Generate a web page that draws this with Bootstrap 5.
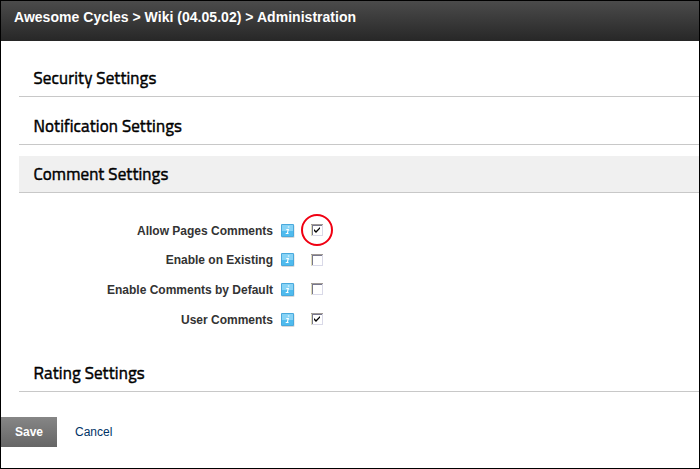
<!DOCTYPE html>
<html lang="en">
<head>
<meta charset="utf-8">
<meta name="viewport" content="width=device-width, initial-scale=1">
<title>Administration</title>
<link href="https://cdn.jsdelivr.net/npm/bootstrap@5.3.0/dist/css/bootstrap.min.css" rel="stylesheet">
<style>
body{font:12px/18px "Liberation Sans",Arial,sans-serif;color:#333;background:#fff}
.page-frame{height:469px;border:1px solid #000;overflow:hidden}
.top-bar{height:40px;padding:7px 13px;background:linear-gradient(#4b4b4b,#272727);color:#fff;font-size:14px;line-height:18px;letter-spacing:.03px}
.sections{padding:19px 0 0 18px}
.section-head{height:37px;margin:0 0 11px;padding:0 14.5px;border-bottom:1px solid #c8c8c8;color:#000;font:400 17px/36px "Titillium Web",Roboto,sans-serif;letter-spacing:.12px;-webkit-text-stroke:.45px #000}
.section-head.active{background:#f0f0f0}
.options{padding:12px 0 21px}
.option{height:29.6px}
.option-label{width:254px;text-align:right}
.info{width:14px;height:14px;margin-left:8px}
.check{width:12px;height:12px;margin:0 0 1px 16px}
.ring{left:-10px;top:-10px;width:32px;height:32px;border:2px solid #f00012;border-radius:50%}
.actions{padding-top:14px}
.save,.save:hover{width:56px;height:30px;background:linear-gradient(#868686,#666);color:#fff;font-size:12px;line-height:30px;padding:0;border:0;border-radius:0}
.cancel{color:#003366;margin-left:18px}
</style>
<script src="https://cdn.jsdelivr.net/npm/bootstrap@5.3.0/dist/js/bootstrap.bundle.min.js"></script>
</head>
<body>
<svg class="d-none">
<symbol id="i-info" viewBox="0 0 14 14"><rect x=".5" y="1" width="13" height="13" rx="1" fill="#d9d9d9"/><rect x="0" y="0" width="13" height="13" rx="1" fill="#4aa9dc"/><rect x="1" y="1" width="11" height="6" fill="#86d3f6"/><rect x="1" y="7" width="11" height="5" fill="#4fbbee"/><path d="M6.8 3h1.6M5.3 5.5h2l-1 4M4.7 9.5h2.9" stroke="#fff" stroke-width="1.1" fill="none"/></symbol>
<symbol id="i-box" viewBox="0 0 12 12"><rect width="12" height="12" fill="#d9d9e8"/><path d="M0 0h12v1H1v11H0z" fill="#a09a96"/><path d="M0 1h1v11H0z" fill="#dedbb8"/><path d="M1 1h10v1H2v9H1z" fill="#77778c"/><rect x="2" y="2" width="9" height="9" fill="#fff"/></symbol>
<symbol id="i-tick" viewBox="0 0 12 12"><path d="M3 5l2 2 4-4v1.8L5 8.9l-2-2z" fill="#000"/></symbol>
</svg>
<main class="page-frame">
<header class="top-bar fw-bold">Awesome Cycles &gt; Wiki (04.05.02) &gt; Administration</header>
<div class="sections">
<h2 class="section-head">Security Settings</h2>
<h2 class="section-head">Notification Settings</h2>
<h2 class="section-head active">Comment Settings</h2>
<div class="options">
<div class="option d-flex align-items-center"><div class="option-label fw-bold">Allow Pages Comments</div><svg class="info"><use href="#i-info"/></svg><div class="check position-relative d-flex"><svg width="12" height="12"><use href="#i-box"/><use href="#i-tick"/></svg><span class="ring position-absolute"></span></div></div>
<div class="option d-flex align-items-center"><div class="option-label fw-bold">Enable on Existing</div><svg class="info"><use href="#i-info"/></svg><div class="check d-flex"><svg width="12" height="12"><use href="#i-box"/></svg></div></div>
<div class="option d-flex align-items-center"><div class="option-label fw-bold">Enable Comments by Default</div><svg class="info"><use href="#i-info"/></svg><div class="check d-flex"><svg width="12" height="12"><use href="#i-box"/></svg></div></div>
<div class="option d-flex align-items-center"><div class="option-label fw-bold">User Comments</div><svg class="info"><use href="#i-info"/></svg><div class="check d-flex"><svg width="12" height="12"><use href="#i-box"/><use href="#i-tick"/></svg></div></div>
</div>
<h2 class="section-head">Rating Settings</h2>
</div>
<div class="actions d-flex align-items-center"><button class="btn save fw-bold">Save</button><a class="cancel text-decoration-none" href="#">Cancel</a></div>
</main>
</body>
</html>
